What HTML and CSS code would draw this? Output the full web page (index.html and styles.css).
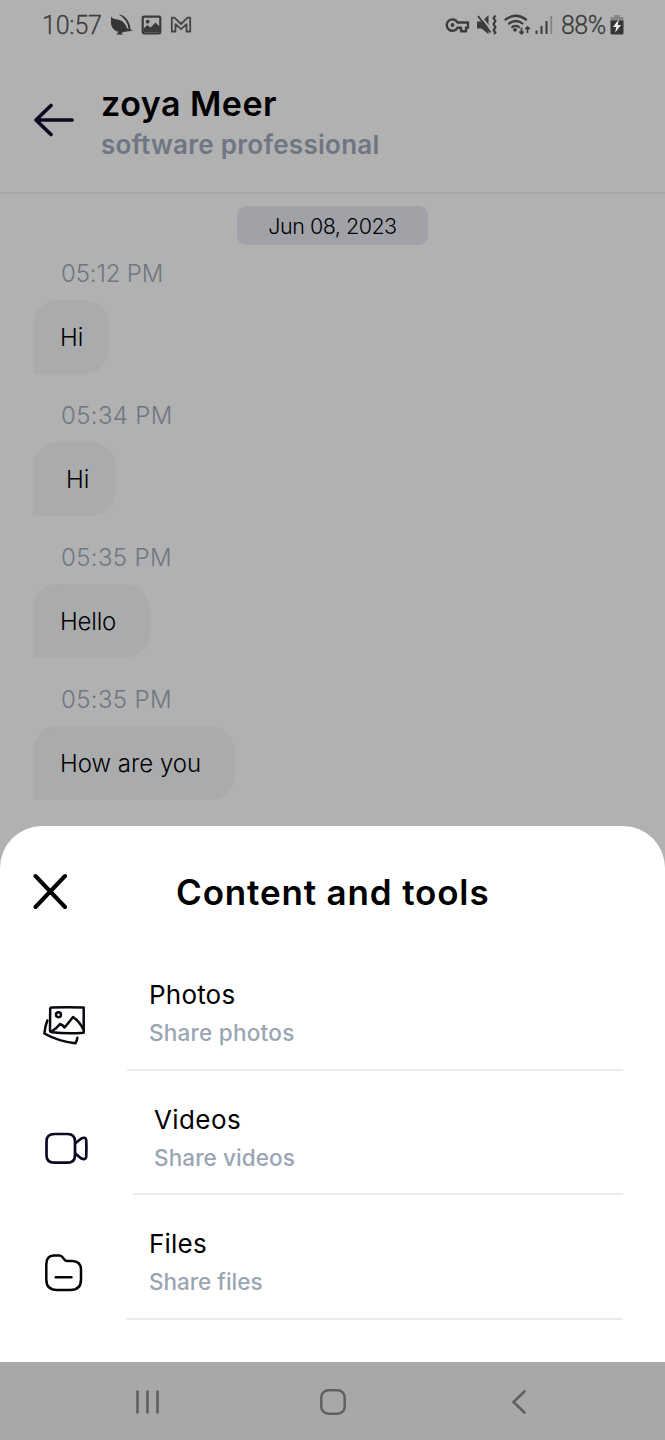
FILE: index.html
```html
<!DOCTYPE html>
<html lang="en">
<head>
<meta charset="utf-8">
<title>Chat</title>
<link rel="stylesheet" href="styles.css">
</head>
<body>
<div class="screen">
  <div class="status">
    <span class="clock">10:57</span>
    <svg class="status-left" width="84" height="26" viewBox="110 12 84 26">
      <path d="M111 16.500q1.500 2.500 5 2.800 5.500.5 8.500 4.200 1.500 2 2.500 4.700l6 2.600-6.500.7-3.500.8-1.800 1.400 2 1.300-7-.7 2.700-2.500-2.600-.6q-4.300-2.400-5.300-7.200z" fill="#353535"/>
      <path d="M118.500 14.200q6 1 9.300 6.300 2.700 4.500 3 9.500l-2.300-.8q-.6-9.500-10-15z" fill="#353535"/>
      <rect x="142.700" y="16.700" width="17.600" height="16.600" rx="1.500" fill="none" stroke="#3c3c3c" stroke-width="2.200"/>
      <circle cx="147.700" cy="21.700" r="1.900" fill="#3c3c3c"/>
      <path d="M143.500 32v-3.500l4-3.500 3 2.500 5-5 4.500 4.500v5z" fill="#3c3c3c"/>
      <path d="M171.800 31.500V17.700h2.600l6.600 6.300 6.600-6.300h2.600v13.800h-3.700v-7.300l-5.500 5-5.500-5v7.300z" fill="none" stroke="#444" stroke-width="1.800" stroke-linejoin="round"/>
    </svg>
    <svg class="status-right" width="112" height="26" viewBox="444 12 112 26">
      <path d="M458.500 22.500H469v5.200h-2v3.600h-5v-3.600h-3.500a5.700 5.700 0 1 1 0-5.200z" fill="none" stroke="#3c3c3c" stroke-width="2.400" stroke-linejoin="round"/>
      <circle cx="453.500" cy="25" r="1.900" fill="#3c3c3c"/>
      <path d="M478 21.500h4.500l7-6.200v19l-7-5.800H478z" fill="#3c3c3c"/>
      <path d="M480.500 14.500L493 31" stroke="#b1b1b1" stroke-width="2"/>
      <path d="M479 16L491.500 32.500" stroke="#3c3c3c" stroke-width="1.900"/>
      <path d="M496.500 15.500l-2 2.600 2 2.900-2 3.200 2 3.100-2 3 2 2.200-1.500 1.500" fill="none" stroke="#3c3c3c" stroke-width="2.200" stroke-linejoin="round"/>
      <g fill="none" stroke="#3c3c3c" stroke-width="2.200" stroke-linecap="round">
        <path d="M506.500 19.500q10.500-7.500 20.500 0M510 23.500q7-5 13.500 0M513.300 27q3.300-2.300 6.500 0"/>
        <path d="M522.500 27.500v6M520.300 31.500l2.200 2.200 2.200-2.200M528.500 33v-6M526.300 29.200l2.200-2.200 2.200 2.200" stroke-width="1.700" stroke-linecap="butt"/>
      </g>
      <circle cx="516" cy="29.800" r="1.900" fill="#3c3c3c"/>
      <path d="M537.500 34v-3.500M542.500 34v-8M547.500 34V21" stroke="#3c3c3c" stroke-width="2"/>
      <path d="M552.300 34V16" stroke="#858585" stroke-width="1.900"/>
    </svg>
    <span class="percent">88%</span>
    <svg class="battery" width="14" height="20" viewBox="0 0 14 20">
      <path d="M4 0h6v2h3.500v4H.5V2H4z" fill="#888"/>
      <path d="M.5 5.500h13V18q0 1.500-1.500 1.500H2Q.5 19.500.5 18z" fill="#353535"/>
      <path d="M8.700 4.500L3 12h3.200l-1 5.500L11 10H7.800z" fill="#eee"/>
    </svg>
  </div>

  <header class="header">
    <svg class="back" width="42" height="36" viewBox="0 0 42 36">
      <path d="M39 18H3M18 3.500L3 18l15 14.500" fill="none" stroke="#0b0920" stroke-width="3.700" stroke-linecap="round" stroke-linejoin="round"/>
    </svg>
    <div class="person">
      <div class="name">zoya Meer</div>
      <div class="role">software professional</div>
    </div>
  </header>

  <main class="chat">
    <div class="date"><span>Jun 08, 2023</span></div>
    <div class="message"><time class="time first-time">05:12 PM</time><div class="bubble hi">Hi</div></div>
    <div class="message"><time class="time">05:34 PM</time><div class="bubble indented">Hi</div></div>
    <div class="message"><time class="time">05:35 PM</time><div class="bubble hello">Hello</div></div>
    <div class="message"><time class="time">05:35 PM</time><div class="bubble question">How are you</div></div>
  </main>

  <section class="sheet">
    <div class="sheet-head">
      <svg class="close" width="36" height="36" viewBox="0 0 36 36">
        <path d="M3.500 3l29.500 31M33 3L3.500 34" stroke="#000" stroke-width="4" stroke-linecap="round"/>
      </svg>
      <h1 class="sheet-title">Content and tools</h1>
    </div>
    <div class="option">
      <svg class="icon" width="50" height="50" viewBox="40 1000 50 50">
        <g fill="none" stroke="#08080f" stroke-width="2.500" stroke-linecap="round" stroke-linejoin="round">
          <path d="M51 1007.500q16-.6 32.700 0v25.200q-16 1.300-31.700-.4-2-.2-2-2.200l.2-21.500z"/>
          <path d="M51.500 1031.500q5.500-3.500 8.500-7.500 3 1 4.500 3.500 4-4.500 8.500-10.500 6.500 4.500 10.500 12.500"/>
          <circle cx="58.500" cy="1014.700" r="2.500"/>
          <path d="M47.300 1020.500q-2.300 6-2.900 13 13 7.500 31 9.800 1.500-2 2-5.500"/>
        </g>
      </svg>
      <div class="option-text"><div class="label photos">Photos</div><div class="hint share-photos">Share photos</div></div>
    </div>
    <div class="option shifted">
      <svg class="icon" width="50" height="50" viewBox="40 1125 50 50">
        <g fill="none" stroke="#0b0920" stroke-width="2.700" stroke-linejoin="round">
          <path d="M54.500 1134h13q7.500 0 7.500 7.500v13.700q0 7.500-7.500 7.500h-13q-8 0-8-7.500v-13.700q0-7.500 8-7.500z"/>
          <path d="M75 1143.500l6-4.800q4.800-2.500 5.200 1.500.5 8 0 16.500-.5 3.800-5.200 1.500l-6-4.800"/>
        </g>
      </svg>
      <div class="option-text"><div class="label videos">Videos</div><div class="hint share-videos">Share videos</div></div>
    </div>
    <div class="option">
      <svg class="icon" width="50" height="50" viewBox="40 1249 50 50">
        <g fill="none" stroke="#050505" stroke-width="2.500" stroke-linecap="round" stroke-linejoin="round">
          <path d="M46.300 1264.500q0-8.500 7.500-8.900h5.500q2.300 0 3.500 2l1.500 2q1 1.400 3.200 1.400h4.500q9 0 9 9v9.500q0 10.500-10.500 10.500H57q-10.700 0-10.700-10.500z"/>
          <path d="M55.800 1277.200h15.600"/>
        </g>
      </svg>
      <div class="option-text"><div class="label files">Files</div><div class="hint share-files">Share files</div></div>
    </div>
  </section>

  <nav class="nav">
    <svg width="26" height="26" viewBox="0 0 26 26"><path d="M2.500 2.500v21M12.500 2.500v21M22.500 2.500v21" stroke="#606060" stroke-width="2.600" stroke-linecap="round"/></svg>
    <svg class="home" width="28" height="28" viewBox="0 0 28 28"><rect x="2.300" y="2.300" width="23.400" height="23.400" rx="7" fill="none" stroke="#606060" stroke-width="2.500"/></svg>
    <svg width="16" height="26" viewBox="0 0 16 26"><path d="M13.500 2.500L2.500 13l11 10.500" fill="none" stroke="#606060" stroke-width="2.600" stroke-linecap="round"/></svg>
  </nav>
</div>
</body>
</html>
```
FILE: styles.css
```css
* { box-sizing: border-box; }
body { margin: 0; background: #b1b1b1; font-family: Inter, "Liberation Sans", sans-serif; color: #000; }
svg { display: block; flex: none; }
.screen { width: 665px; height: 1440px; display: flex; flex-direction: column; overflow: hidden; }

.status { height: 50px; flex: none; display: flex; align-items: center; padding: 0 41px 0 42px; font-family: Roboto, sans-serif; font-size: 25px; color: #3c3c3c; }
.clock { width: 68px; letter-spacing: -0.2px; font-weight: 300; -webkit-text-stroke: 0.3px #3c3c3c; }
.status-right { margin-left: auto; }
.percent { width: 52px; margin-left: 6px; font-size: 25px; font-weight: 300; letter-spacing: -0.5px; white-space: nowrap; -webkit-text-stroke: 0.3px #3c3c3c; }
.battery { margin-left: -3px; }

.header { height: 144px; flex: none; display: flex; align-items: flex-start; padding: 34px 33px 0; border-bottom: 2px solid #a6a8a9; }
.back { margin-top: 18px; }
.person { margin-left: 26px; white-space: nowrap; }
.name { height: 41px; line-height: 40px; font-size: 34px; font-weight: 600; letter-spacing: 0.5px; }
.role { height: 40px; line-height: 40px; font-size: 26px; font-weight: 600; letter-spacing: 0.28px; color: #6d7682; }

.chat { height: 632px; flex: none; padding: 12px 33px 0; }
.date { width: 191px; height: 39px; margin-left: 204px; display: flex; align-items: center; justify-content: center; border-radius: 9px; background: #a1a2a8; font-size: 21.5px; font-weight: 300; letter-spacing: -0.5px; white-space: nowrap; }
.message { height: 142px; }
.message:nth-child(2) { margin-top: 1px; }
.time { display: block; height: 54px; line-height: 56px; padding-left: 28px; font-size: 24px; font-weight: 300; letter-spacing: 0.35px; color: #6f7681; white-space: nowrap; }
.first-time { letter-spacing: -0.15px; }
.bubble { height: 74px; line-height: 75px; padding-left: 27px; border-radius: 25px 25px 25px 0; background: #a9abad; font-size: 24px; font-weight: 300; white-space: nowrap; }
.hi { width: 76px; }
.indented { width: 83px; padding-left: 33px; }
.hello { width: 117px; letter-spacing: -0.2px; }
.question { width: 202px; }

.sheet { height: 536px; flex: none; background: #fff; border-radius: 42px 42px 0 0; }
.sheet-head { height: 120px; display: flex; padding: 47px 32px 0; }
.sheet-title { margin: -1px 0 0 108px; height: 40px; line-height: 40px; font-size: 35px; font-weight: 600; letter-spacing: 0.85px; white-space: nowrap; }
.option { height: 124.5px; display: flex; padding: 0 42px 0 40px; }
.icon { margin-top: 54px; }
.option-text { flex: 1; margin-left: 37px; padding: 29px 0 0 22px; border-bottom: 2px solid #e8eaec; white-space: nowrap; }
.shifted .option-text { margin-left: 43px; padding-left: 21px; }
.label { height: 38px; line-height: 39px; font-size: 26px; font-weight: 400; letter-spacing: 0.2px; }
.videos { letter-spacing: 0.4px; }
.hint { height: 38px; line-height: 39px; font-size: 22.5px; font-weight: 500; color: #9aa5b4; }
.share-photos { letter-spacing: 0.25px; }
.share-videos { letter-spacing: 0.1px; }

.nav { height: 78px; flex: none; display: flex; align-items: center; justify-content: space-between; padding: 1px 138px 0 135px; background: #a8a8a8; }
.home { margin-right: 7px; }
```
